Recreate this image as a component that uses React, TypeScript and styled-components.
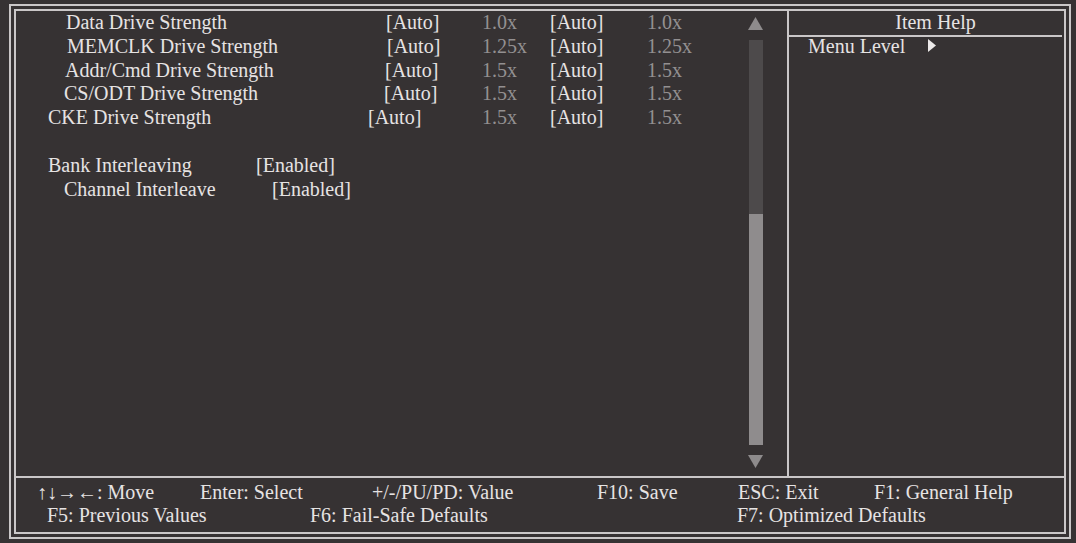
import React from "react";
import styled, { createGlobalStyle } from "styled-components";

const GlobalStyle = createGlobalStyle`
  html, body {
    margin: 0;
    padding: 0;
    background: #363233;
  }
  body {
    font-family: "Liberation Serif", "Times New Roman", serif;
    color: #e8e6e6;
    overflow: hidden;
  }
`;

const driveRows = [
  { label: "Data Drive Strength", indent: 50, mult: "1.0x" },
  { label: "MEMCLK Drive Strength", indent: 51, mult: "1.25x" },
  { label: "Addr/Cmd Drive Strength", indent: 49, mult: "1.5x" },
  { label: "CS/ODT Drive Strength", indent: 48, mult: "1.5x" },
  { label: "CKE Drive Strength", indent: 32, mult: "1.5x" },
];

const interleaveRows = [
  { label: "Bank Interleaving", indent: 32, value: "[Enabled]" },
  { label: "Channel Interleave", indent: 48, value: "[Enabled]" },
];

const App = () => {
  return (
    <>
      <GlobalStyle />
      <Frame>
        <Inner>
          <Main>
            <LeftPanel>
              <Rows>
                {driveRows.map((r) => (
                  <DriveRow key={r.label}>
                    <Lead $indent={r.indent}>
                      <Label $width={320}>{r.label}</Label>
                      <Value>[Auto]</Value>
                    </Lead>
                    <Mult>{r.mult}</Mult>
                    <Value>[Auto]</Value>
                    <Mult>{r.mult}</Mult>
                  </DriveRow>
                ))}
                <BlankRow />
                {interleaveRows.map((r) => (
                  <SettingRow key={r.label} $indent={r.indent}>
                    <Label $width={208}>{r.label}</Label>
                    <Value>{r.value}</Value>
                  </SettingRow>
                ))}
              </Rows>
              <ScrollBar>
                <Arrow viewBox="0 0 15 13">
                  <polygon points="7.5,0 15,13 0,13" />
                </Arrow>
                <Track>
                  <Thumb $height={231} />
                </Track>
                <Arrow viewBox="0 0 15 13">
                  <polygon points="0,0 15,0 7.5,13" />
                </Arrow>
              </ScrollBar>
            </LeftPanel>
            <RightPanel>
              <HelpTitle>Item Help</HelpTitle>
              <MenuLevel>
                <span>Menu Level</span>
                <svg width="8" height="13" viewBox="0 0 8 13">
                  <polygon points="0,0 8,6.5 0,13" fill="#ece9e9" />
                </svg>
              </MenuLevel>
            </RightPanel>
          </Main>
          <Footer>
            <FooterRow $pad={21} $cols="163px 172px 225px 141px 136px auto">
              <span>↑↓→←: Move</span>
              <span>Enter: Select</span>
              <span>+/-/PU/PD: Value</span>
              <span>F10: Save</span>
              <span>ESC: Exit</span>
              <span>F1: General Help</span>
            </FooterRow>
            <FooterRow $pad={31} $cols="263px 427px auto">
              <span>F5: Previous Values</span>
              <span>F6: Fail-Safe Defaults</span>
              <span>F7: Optimized Defaults</span>
            </FooterRow>
          </Footer>
        </Inner>
      </Frame>
    </>
  );
};

export default App;

const Frame = styled.div`
  margin: 4px 0 0 9px;
  width: 1062px;
  height: 535px;
  box-sizing: border-box;
  border: 2px solid #cac7c8;
  padding: 3px;
`;
const Inner = styled.div`
  height: 100%;
  box-sizing: border-box;
  border: 2px solid #cac7c8;
  display: flex;
  flex-direction: column;
`;
const Main = styled.div`
  height: 465px;
  display: flex;
  border-bottom: 2px solid #cac7c8;
`;
const LeftPanel = styled.div`
  width: 771px;
  display: flex;
  border-right: 2px solid #cac7c8;
`;
const Rows = styled.div`
  flex: 1;
  font-size: 20px;
  line-height: 23.8px;
`;
const DriveRow = styled.div`
  display: grid;
  grid-template-columns: 466px 68px 97px auto;
  white-space: nowrap;
`;
const Lead = styled.div<{ $indent: number }>`
  display: flex;
  padding-left: ${(p) => p.$indent}px;
`;
const Label = styled.span<{ $width: number }>`
  width: ${(p) => p.$width}px;
  flex-shrink: 0;
  color: #e6e3e3;
`;
const Value = styled.span`
  color: #e6e3e3;
`;
const Mult = styled.span`
  color: #939091;
`;
const BlankRow = styled.div`
  height: 23.8px;
`;
const SettingRow = styled.div<{ $indent: number }>`
  display: flex;
  padding-left: ${(p) => p.$indent}px;
  white-space: nowrap;
`;
const ScrollBar = styled.div`
  width: 15px;
  margin-right: 24px;
  padding: 6px 0 8px;
  display: flex;
  flex-direction: column;
  gap: 10px;
`;
const Arrow = styled.svg`
  width: 15px;
  height: 13px;
  flex-shrink: 0;
  fill: #8e8b8c;
`;
const Track = styled.div`
  flex: 1;
  width: 14px;
  margin: 0 auto 0 1px;
  background: #4d4a4b;
  display: flex;
  flex-direction: column;
  justify-content: flex-end;
`;
const Thumb = styled.div<{ $height: number }>`
  height: ${(p) => p.$height}px;
  background: #8f8c8d;
`;
const RightPanel = styled.div`
  flex: 1;
  font-size: 20px;
`;
const HelpTitle = styled.div`
  height: 24px;
  line-height: 22px;
  text-align: center;
  padding-left: 20px;
  margin-right: 2px;
  border-bottom: 2px solid #cac7c8;
  color: #e6e3e3;
`;
const MenuLevel = styled.div`
  display: flex;
  align-items: center;
  gap: 23px;
  padding-left: 19px;
  line-height: 22px;
  margin-top: -2px;
  color: #e6e3e3;
  svg {
    margin-top: -2px;
  }
`;
const Footer = styled.div`
  flex: 1;
  padding-top: 3px;
  font-size: 20px;
  line-height: 23px;
`;
const FooterRow = styled.div<{ $pad: number; $cols: string }>`
  display: grid;
  grid-template-columns: ${(p) => p.$cols};
  padding-left: ${(p) => p.$pad}px;
  white-space: nowrap;
  color: #e6e3e3;
`;
